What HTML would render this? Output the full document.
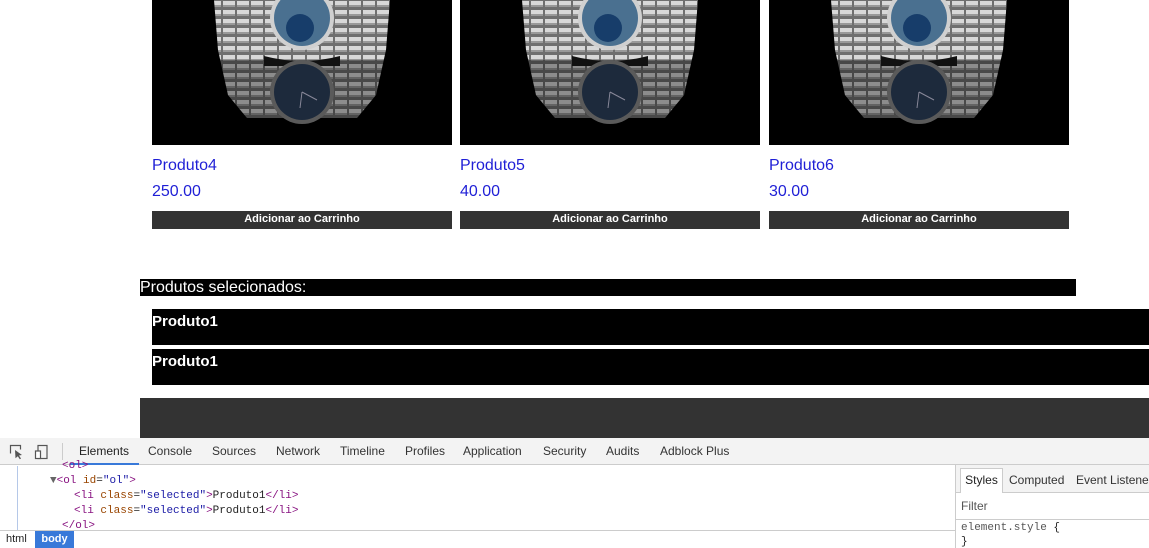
<!DOCTYPE html>
<html><head><meta charset="utf-8"><style>
*{margin:0;padding:0;box-sizing:border-box}
body{width:1149px;height:548px;overflow:hidden;background:#fff;font-family:"Liberation Sans",sans-serif;position:relative}
.a{position:absolute}
.t{position:absolute;color:#1f1fd6;font-size:16px}
.btn{position:absolute;top:211px;width:300px;height:18px;background:#333;color:#fff;font-size:11px;font-weight:bold;text-align:center;line-height:17px}
.li{position:absolute;left:152px;width:997px;height:36px;background:#000;color:#fff;font-size:15px;font-weight:bold;line-height:26px}
.tab{position:absolute;top:438px;height:27px;line-height:27px;font-size:12px;color:#333}
.code{position:absolute;font-family:"Liberation Mono",monospace;font-size:11px;color:#222;white-space:pre}
.tg{color:#881280}.at{color:#994500}.av{color:#1a1aa6}
</style></head><body>

<svg width="0" height="0" style="position:absolute"><defs>
<pattern id="br" width="14" height="9" patternUnits="userSpaceOnUse">
<rect width="14" height="9" fill="#6f6f6f"/>
<rect x="1" y="1" width="12" height="5" fill="#d8d8d8"/>
<rect x="1" y="5" width="12" height="2" fill="#999"/>
</pattern>
<g id="w">
<rect width="300" height="145" fill="#000"/>
<path d="M62 0 L238 0 L234 50 L224 95 L205 118 L95 118 L76 95 L66 50 Z" fill="url(#br)"/>
<path d="M62 60 L238 60 L224 95 L205 118 L95 118 L76 95 Z" fill="#000" opacity=".35"/>
<circle cx="150" cy="18" r="32" fill="#d0d0d0"/>
<circle cx="150" cy="18" r="28" fill="#4a7090"/>
<circle cx="148" cy="28" r="14" fill="#173d6a"/>
<path d="M112 56 Q150 66 188 56 L188 66 L112 66Z" fill="#111"/>
<circle cx="150" cy="92" r="32" fill="#5a5a5a"/>
<circle cx="150" cy="92" r="28" fill="#1d2a3c"/>
<path d="M150 92 L165 100 M150 92 L148 108" stroke="#889" stroke-width="1"/>
</g></defs></svg>

<svg class="a" style="left:152px;top:0" width="300" height="145"><use href="#w"/></svg>
<svg class="a" style="left:460px;top:0" width="300" height="145"><use href="#w"/></svg>
<svg class="a" style="left:769px;top:0" width="300" height="145"><use href="#w"/></svg>

<div class="t" style="left:152px;top:157px">Produto4</div>
<div class="t" style="left:460px;top:157px">Produto5</div>
<div class="t" style="left:769px;top:157px">Produto6</div>
<div class="t" style="left:152px;top:183px">250.00</div>
<div class="t" style="left:460px;top:183px">40.00</div>
<div class="t" style="left:769px;top:183px">30.00</div>
<div class="btn" style="left:152px">Adicionar ao Carrinho</div>
<div class="btn" style="left:460px">Adicionar ao Carrinho</div>
<div class="btn" style="left:769px">Adicionar ao Carrinho</div>

<div class="a" style="left:140px;top:279px;width:936px;height:17px;background:#000;color:#fff;font-size:16px;line-height:17px">Produtos selecionados:</div>
<div class="li" style="top:309px">Produto1</div>
<div class="li" style="top:349px">Produto1</div>
<div class="a" style="left:140px;top:398px;width:1009px;height:40px;background:#333"></div>

<div class="a" style="left:0;top:438px;width:1149px;height:27px;background:#f3f3f3;border-bottom:1px solid #ccc"></div>
<svg class="a" style="left:9px;top:444px" width="45" height="16" fill="none" stroke="#555" stroke-width="1.2">
<path d="M1.5 9.5V1.5h10v4"/><path d="M6 6l7 5-3 .5 2 3-1.2.7-2-3-2.3 2z" fill="#555" stroke="none"/>
<rect x="29" y="1.5" width="9" height="13"/><rect x="26.5" y="7" width="5" height="7.5" fill="#fff"/>
</svg>
<div class="a" style="left:62px;top:443px;width:1px;height:17px;background:#ccc"></div>
<div class="tab" style="left:79px;color:#222">Elements</div>
<div class="a" style="left:70px;top:463px;width:69px;height:2px;background:#3879d9"></div>
<div class="tab" style="left:148px">Console</div>
<div class="tab" style="left:212px">Sources</div>
<div class="tab" style="left:276px">Network</div>
<div class="tab" style="left:340px">Timeline</div>
<div class="tab" style="left:405px">Profiles</div>
<div class="tab" style="left:463px">Application</div>
<div class="tab" style="left:543px">Security</div>
<div class="tab" style="left:606px">Audits</div>
<div class="tab" style="left:660px">Adblock Plus</div>

<div class="a" style="left:17px;top:466px;width:1px;height:64px;background:#b5c8e8"></div>
<div class="code" style="left:62px;top:460px;color:#881280">&lt;ol&gt;</div>
<div class="code" style="left:50px;top:475px"><span style="color:#666">▼</span><span class="tg">&lt;ol</span> <span class="at">id</span>=<span class="av">"ol"</span><span class="tg">&gt;</span></div>
<div class="code" style="left:74px;top:490px"><span class="tg">&lt;li</span> <span class="at">class</span>=<span class="av">"selected"</span><span class="tg">&gt;</span>Produto1<span class="tg">&lt;/li&gt;</span></div>
<div class="code" style="left:74px;top:505px"><span class="tg">&lt;li</span> <span class="at">class</span>=<span class="av">"selected"</span><span class="tg">&gt;</span>Produto1<span class="tg">&lt;/li&gt;</span></div>
<div class="code" style="left:62px;top:520px"><span class="tg">&lt;/ol&gt;</span></div>

<div class="a" style="left:0;top:530px;width:955px;height:18px;background:#fff;border-top:1px solid #ccc"></div>
<div class="a" style="left:6px;top:533px;font-size:11px;color:#222">html</div>
<div class="a" style="left:35px;top:531px;width:39px;height:17px;background:#3879d9;color:#fff;font-size:11px;font-weight:bold;text-align:center;line-height:16px">body</div>

<div class="a" style="left:955px;top:465px;width:194px;height:83px;background:#fff;border-left:1px solid #ccc"></div>
<div class="a" style="left:955px;top:465px;width:194px;height:28px;background:#f3f3f3;border-left:1px solid #ccc;border-bottom:1px solid #ccc"></div>
<div class="a" style="left:960px;top:468px;width:43px;height:25px;background:#fff;border:1px solid #ccc;border-bottom:none;font-size:12px;line-height:23px;text-align:center;color:#222">Styles</div>
<div class="a" style="left:1009px;top:473px;font-size:12px;color:#333">Computed</div>
<div class="a" style="left:1076px;top:473px;font-size:12px;color:#333;white-space:nowrap">Event Listeners</div>
<div class="a" style="left:961px;top:499px;font-size:12px;color:#555">Filter</div>
<div class="a" style="left:956px;top:519px;width:193px;height:1px;background:#ccc"></div>
<div class="code" style="left:961px;top:522px;color:#555">element.style <span style="color:#222">{</span></div>
<div class="code" style="left:961px;top:536px">}</div>
</body></html>
